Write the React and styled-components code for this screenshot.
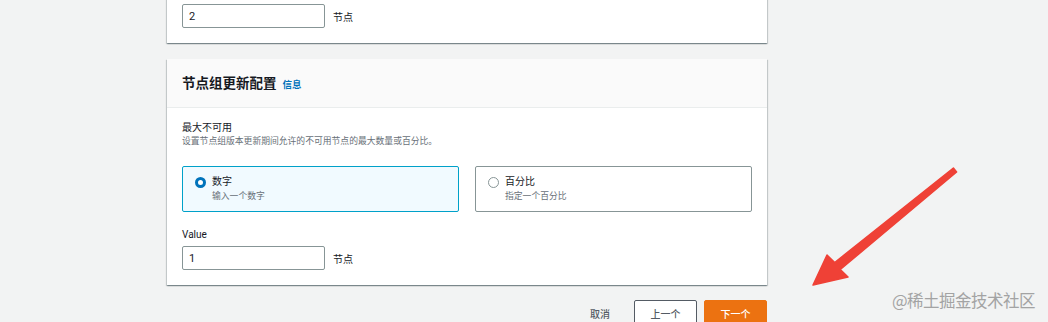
import React, { useState } from "react";
import styled, { createGlobalStyle } from "styled-components";

const GlobalStyle = createGlobalStyle`
    html, body {
        margin: 0;
        padding: 0;
        background: #f2f3f3;
        height: 322px;
        overflow: hidden;
    }
    body {
        font-family: Roboto, "Noto Sans CJK SC", sans-serif;
        color: #16191f;
    }
`;

const Page = styled.div`
    position: relative;
    width: 1048px;
    height: 322px;
    overflow: hidden;
`;

const Main = styled.div`
    width: 600px;
    margin-left: 167px;
    display: flex;
    flex-direction: column;
    gap: 16px;
`;

const Card = styled.section`
    background: #fff;
    box-shadow: 0 1px 1px 0 rgba(0, 28, 36, 0.3), 1px 1px 1px 0 rgba(0, 28, 36, 0.15),
        -1px 1px 1px 0 rgba(0, 28, 36, 0.15);
    margin-top: ${p => (p.$offset ? p.$offset : 0)}px;
`;

const CardHeader = styled.header`
    background: #fafafa;
    border-bottom: 1px solid #eaeded;
    padding: 14px 15px;
    display: flex;
    align-items: baseline;
    gap: 6px;
`;

const Title = styled.h2`
    margin: 0;
    font-size: 13.5px;
    line-height: 20px;
    font-weight: 700;
`;

const InfoLink = styled.a`
    font-size: 9.5px;
    font-weight: 700;
    color: #0073bb;
    text-decoration: none;
`;

const CardBody = styled.div`
    padding: ${p => p.$pad || "13px 15px 15px"};
`;

const FieldLabel = styled.div`
    font-size: 10px;
    line-height: 14px;
`;

const FieldDesc = styled.div`
    font-size: 8.8px;
    line-height: 13px;
    color: #687078;
`;

const InputRow = styled.div`
    display: flex;
    align-items: center;
    gap: 8px;
    margin-top: ${p => p.$mt || 0}px;
`;

const TextInput = styled.input`
    box-sizing: border-box;
    width: 143px;
    height: 24px;
    border: 1px solid #879596;
    border-radius: 2px;
    padding: 0 6px;
    font-family: Roboto, "Noto Sans CJK SC", sans-serif;
    font-size: 11px;
    color: #16191f;
    outline: none;
`;

const Unit = styled.span`
    font-size: 10px;
`;

const Tiles = styled.div`
    display: grid;
    grid-template-columns: 1fr 1fr;
    gap: 16px;
    margin: 18px 0 16px;
`;

const Tile = styled.label`
    box-sizing: border-box;
    height: 46px;
    display: flex;
    align-items: flex-start;
    gap: 6px;
    padding: 8px 12px 0 12px;
    border: 1px solid ${p => (p.$checked ? "#00a1c9" : "#879596")};
    background: ${p => (p.$checked ? "#f1faff" : "#fff")};
    border-radius: 2px;
    cursor: pointer;
`;

const Radio = styled.span`
    box-sizing: border-box;
    flex: none;
    width: 11px;
    height: 11px;
    margin-top: 1.5px;
    border-radius: 50%;
    background: #fff;
    border: ${p => (p.$checked ? "3.5px solid #0073bb" : "1px solid #879596")};
`;

const TileText = styled.div`
    display: flex;
    flex-direction: column;
`;

const TileTitle = styled.span`
    font-size: 10px;
    line-height: 14px;
`;

const TileSub = styled.span`
    font-size: 8.8px;
    line-height: 14px;
    color: #687078;
`;

const Actions = styled.div`
    display: flex;
    justify-content: flex-end;
    align-items: center;
    gap: 7px;
    margin-top: -1px;
`;

const Button = styled.button`
    box-sizing: border-box;
    height: 26px;
    min-width: 63px;
    padding: ${p => (p.$variant === "link" ? "0 16px 0 0" : "0 12px")};
    border-radius: 2px;
    font-family: Roboto, "Noto Sans CJK SC", sans-serif;
    font-size: 10px;
    font-weight: 500;
    cursor: pointer;
    border: 1px solid ${p => (p.$variant === "primary" ? "#ec7211" : p.$variant === "link" ? "transparent" : "#545b64")};
    background: ${p => (p.$variant === "primary" ? "#ec7211" : p.$variant === "link" ? "transparent" : "#fff")};
    color: ${p => (p.$variant === "primary" ? "#fff" : "#545b64")};
    text-align: ${p => (p.$variant === "link" ? "right" : "center")};
`;

const Arrow = styled.svg`
    position: absolute;
    left: 0;
    top: 0;
    pointer-events: none;
`;

const Watermark = styled.div`
    position: absolute;
    right: 13px;
    bottom: 11px;
    font-family: "Noto Sans CJK SC", sans-serif;
    font-size: 16.5px;
    line-height: 22px;
    color: #a3a3a3;
    letter-spacing: -0.5px;
`;

const options = [
    { id: "number", title: "数字", sub: "输入一个数字" },
    { id: "percent", title: "百分比", sub: "指定一个百分比" }
];

export default function App() {
    const [mode, setMode] = useState("number");
    const [size, setSize] = useState("2");
    const [value, setValue] = useState("1");

    return (
        <Page>
            <GlobalStyle />
            <Main>
                <Card $offset={-12}>
                    <CardBody $pad="16px 15px 15px">
                        <InputRow>
                            <TextInput value={size} onChange={e => setSize(e.target.value)} />
                            <Unit>节点</Unit>
                        </InputRow>
                    </CardBody>
                </Card>

                <Card>
                    <CardHeader>
                        <Title>节点组更新配置</Title>
                        <InfoLink href="#">信息</InfoLink>
                    </CardHeader>
                    <CardBody>
                        <FieldLabel>最大不可用</FieldLabel>
                        <FieldDesc>设置节点组版本更新期间允许的不可用节点的最大数量或百分比。</FieldDesc>
                        <Tiles>
                            {options.map(o => (
                                <Tile key={o.id} $checked={mode === o.id} onClick={() => setMode(o.id)}>
                                    <Radio $checked={mode === o.id} />
                                    <TileText>
                                        <TileTitle>{o.title}</TileTitle>
                                        <TileSub>{o.sub}</TileSub>
                                    </TileText>
                                </Tile>
                            ))}
                        </Tiles>
                        <FieldLabel>Value</FieldLabel>
                        <InputRow $mt={4}>
                            <TextInput value={value} onChange={e => setValue(e.target.value)} />
                            <Unit>节点</Unit>
                        </InputRow>
                    </CardBody>
                </Card>

                <Actions>
                    <Button $variant="link">取消</Button>
                    <Button>上一个</Button>
                    <Button $variant="primary">下一个</Button>
                </Actions>
            </Main>

            <Arrow width="1048" height="322" viewBox="0 0 1048 322">
                <polygon
                    points="953.4,168.1 956.6,171.9 840.3,269.5 848,277 813,285 827,255 834.7,262.5"
                    fill="#ef4136"
                    stroke="#ef4136"
                    strokeWidth="1.5"
                    strokeLinejoin="round"
                />
            </Arrow>
            <Watermark>@稀土掘金技术社区</Watermark>
        </Page>
    );
}
